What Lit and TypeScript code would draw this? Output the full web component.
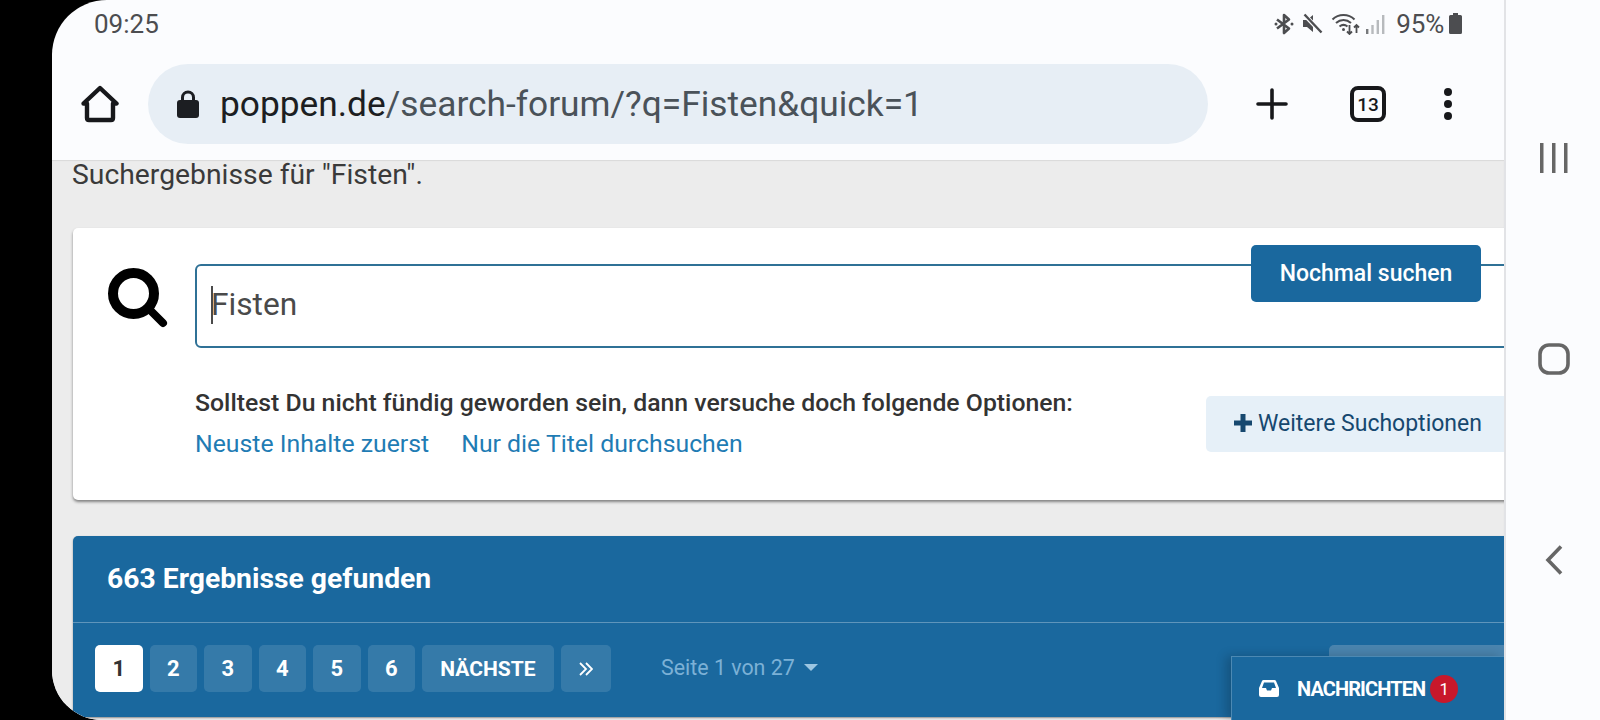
import { LitElement, css, html } from 'lit';
import { customElement } from 'lit/decorators.js';

const PAGES = ['1', '2', '3', '4', '5', '6'];

@customElement('app-root')
export class AppRoot extends LitElement {
  static styles = css`
    :host {
      display: block;
      width: 1600px;
      height: 720px;
      background: #000;
      overflow: hidden;
      font-family: Roboto, "Liberation Sans", sans-serif;
    }
    svg { display: block; flex: none; }

    .screen {
      margin-left: 52px;
      width: 1548px;
      height: 720px;
      display: flex;
      overflow: hidden;
      border-radius: 55px 0 0 50px;
      background: #fbfcfe;
    }
    .browser {
      position: relative;
      width: 1452px;
      height: 720px;
      flex: none;
      display: flex;
      flex-direction: column;
      overflow: hidden;
    }
    .edge { width: 2px; flex: none; background: #e2e3e6; }

    /* android chrome */
    .status {
      height: 50px;
      flex: none;
      display: flex;
      align-items: center;
      padding: 0 42px 3px 42px;
      box-sizing: border-box;
      color: #4c4d50;
      font-size: 26px;
    }
    .status .time { flex: 1; }
    .status .pct { margin: 0 5px 0 11px; letter-spacing: -0.2px; }
    .status .icons { display: flex; align-items: center; gap: 8px; }

    .toolbar {
      height: 110px;
      flex: none;
      display: flex;
      align-items: flex-start;
      padding: 14px 0 0 29px;
      box-sizing: border-box;
    }
    .url {
      width: 1060px;
      height: 80px;
      margin-left: 29px;
      flex: none;
      display: flex;
      align-items: center;
      box-sizing: border-box;
      padding-left: 29px;
      border-radius: 40px;
      background: #e7eef5;
      font-size: 35.3px;
      color: #4a5259;
    }
    .url b { font-weight: 400; color: #1c1e22; }
    .url svg { margin-right: 21px; }
    .tb-actions { display: flex; align-items: center; height: 80px; }
    .tb-plus { margin-left: 48px; }
    .tabs {
      width: 36px;
      height: 36px;
      margin-left: 62px;
      box-sizing: border-box;
      border: 4px solid #17181b;
      border-radius: 8px;
      display: flex;
      align-items: center;
      justify-content: center;
      font-size: 19px;
      font-weight: 500;
      color: #17181b;
    }
    .tb-dots { margin-left: 58px; }

    /* page */
    .page {
      flex: 1;
      min-height: 0;
      display: flex;
      flex-direction: column;
      align-items: flex-start;
      padding-left: 21px;
      background: #ececec;
      box-shadow: inset 0 1px 1px rgba(0, 0, 0, 0.08);
    }
    .lead {
      height: 30px;
      margin-left: -1px;
      line-height: 30px;
      font-size: 28.3px;
      color: #3a3a3a;
    }
    .card {
      position: relative;
      margin-top: 38px;
      width: 1500px;
      height: 272px;
      flex: none;
      padding: 36px 0 0 35px;
      box-sizing: border-box;
      background: #fff;
      border-radius: 5px;
      box-shadow: 0 2px 3px rgba(0, 0, 0, 0.45);
    }
    .search-row { display: flex; align-items: flex-start; gap: 27px; }
    .search-row svg { margin-top: 4px; }
    .field {
      width: 1340px;
      height: 84px;
      box-sizing: border-box;
      display: flex;
      align-items: center;
      padding: 0 0 3px 14px;
      border: 2px solid #2f7196;
      border-radius: 6px;
      font-size: 31.7px;
      color: #4a4a4a;
    }
    .caret { width: 2px; height: 38px; margin-right: -2px; background: #4a4a4a; }
    .again {
      position: absolute;
      left: 1178px;
      top: 17px;
      width: 230px;
      height: 57px;
      display: flex;
      align-items: center;
      justify-content: center;
      border-radius: 5px;
      background: #1a689e;
      color: #fff;
      font-size: 23px;
      font-weight: 500;
    }
    .hints { display: flex; margin: 40px 0 0 87px; }
    .hints-text { width: 1011px; flex: none; }
    .hint {
      line-height: 30px;
      font-size: 24.8px;
      font-weight: 500;
      color: #333;
    }
    .links {
      display: flex;
      gap: 32px;
      margin-top: 11px;
      line-height: 30px;
      font-size: 24.8px;
      color: #1f7cb4;
    }
    .more {
      width: 320px;
      height: 56px;
      margin-top: 8px;
      flex: none;
      display: flex;
      align-items: center;
      gap: 6px;
      padding: 0 0 2px 28px;
      box-sizing: border-box;
      border-radius: 5px;
      background: #e6f0f8;
      font-size: 23px;
      color: #16486f;
    }

    .results {
      margin-top: 36px;
      width: 1500px;
      height: 181px;
      flex: none;
      background: #1a689e;
      border-radius: 5px 0 0 5px;
      box-shadow: 0 1px 2px rgba(0, 0, 0, 0.4);
      color: #fff;
    }
    .results-title {
      height: 87px;
      display: flex;
      align-items: center;
      padding: 0 0 2px 34px;
      box-sizing: border-box;
      font-size: 28.3px;
      font-weight: 700;
      border-bottom: 1px solid rgba(255, 255, 255, 0.3);
    }
    .pager {
      display: flex;
      align-items: center;
      gap: 7px;
      padding: 22px 0 0 22px;
    }
    .pg {
      min-width: 47.5px;
      height: 47px;
      display: flex;
      align-items: center;
      justify-content: center;
      box-sizing: border-box;
      border-radius: 5px;
      background: rgba(255, 255, 255, 0.12);
      font-size: 22px;
      font-weight: 700;
    }
    .pg.active { background: #fff; color: #333; }
    .pg.next { width: 132px; font-size: 21px; }
    .pg.last { width: 50px; }
    .page-of {
      margin-left: 43px;
      padding-bottom: 2px;
      display: flex;
      align-items: center;
      gap: 9px;
      font-size: 21.4px;
      color: #7cb1d6;
    }
    .tri {
      width: 0;
      height: 0;
      border-left: 7px solid transparent;
      border-right: 7px solid transparent;
      border-top: 7px solid #9cc6e2;
    }
    .ghost {
      width: 200px;
      height: 47px;
      margin-left: 504px;
      flex: none;
      border-radius: 5px;
      background: #4a84ae;
    }

    .inbox {
      position: absolute;
      right: 0;
      bottom: 0;
      width: 273px;
      height: 64px;
      display: flex;
      align-items: center;
      padding: 0 0 0 27px;
      box-sizing: border-box;
      background: #1a689e;
      border-top: 1px solid rgba(255, 255, 255, 0.22);
      border-left: 1px solid rgba(255, 255, 255, 0.22);
      box-shadow: -5px 0 10px rgba(0, 0, 0, 0.2);
      color: #fff;
      font-size: 20px;
      font-weight: 700;
      letter-spacing: -0.9px;
    }
    .inbox svg { margin-right: 18px; }
    .badge {
      width: 28px;
      height: 28px;
      margin-left: 5px;
      display: flex;
      align-items: center;
      justify-content: center;
      border-radius: 50%;
      background: #c8182b;
      font-size: 17px;
      font-weight: 400;
      letter-spacing: 0;
    }

    /* system nav */
    .nav {
      flex: 1;
      display: flex;
      flex-direction: column;
      align-items: center;
      justify-content: center;
      gap: 170px;
      padding: 0 0 3px 2px;
      box-sizing: border-box;
    }
  `;

  private statusIcons() {
    return html`
      <svg width="20" height="22" viewBox="0 0 20 22" fill="none" stroke="#4c4d50" stroke-width="2.6" style="margin-left:2px">
        <path d="M3 6.5 L15 15.5 L10 20 V2 L15 6.5 L3 15.5" stroke-linejoin="round"/>
        <circle cx="2" cy="11" r="1.5" fill="#4c4d50" stroke="none"/>
        <circle cx="18" cy="11" r="1.5" fill="#4c4d50" stroke="none"/>
      </svg>
      <svg width="21" height="21" viewBox="0 0 21 21">
        <path d="M1 7 H5 L11 2 V19 L5 14 H1 Z" fill="#4c4d50"/>
        <path d="M2 1.5 L19.5 19.5" stroke="#fbfcfe" stroke-width="4.5"/>
        <path d="M2.5 1.5 L19.5 19.5" stroke="#4c4d50" stroke-width="2.4"/>
      </svg>
      <svg width="31" height="22" viewBox="0 0 30 22" fill="none" stroke="#4c4d50">
        <path d="M1 6.5 C7 0.5 17 0.5 23 6.5" stroke-width="2"/>
        <path d="M4.5 10 C9 6 15 6 19.5 10" stroke-width="2"/>
        <path d="M8 13.5 C10.5 11.5 13.5 11.5 16 13.5" stroke-width="2"/>
        <circle cx="12" cy="16.5" r="1.5" fill="#4c4d50" stroke="none"/>
        <path d="M18 12 V21 M15.5 18.5 L18 21 L20.5 18.5" stroke-width="1.8"/>
        <path d="M25 20 V12 M22.5 14.5 L25 12 L27.5 14.5" stroke-width="1.8"/>
      </svg>
      <svg width="19" height="20" viewBox="0 0 19 20" fill="#b7babd" style="margin-left:-4px">
        <rect x="0" y="15" width="2.4" height="5" fill="#77797c"/>
        <rect x="5.3" y="11" width="2.4" height="9"/>
        <rect x="10.6" y="6" width="2.4" height="14"/>
        <rect x="16" y="1" width="2.4" height="19"/>
      </svg>
    `;
  }

  protected render() {
    return html`
      <div class="screen">
        <div class="browser">
          <div class="status">
            <span class="time">09:25</span>
            <span class="icons">${this.statusIcons()}</span>
            <span class="pct">95%</span>
            <svg width="13" height="21" viewBox="0 0 13 21" fill="#4c4d50">
              <path d="M4 0 H9 V2 H11.5 Q13 2 13 3.5 V19.5 Q13 21 11.5 21 H1.5 Q0 21 0 19.5 V3.5 Q0 2 1.5 2 H4 Z"/>
            </svg>
          </div>
          <div class="toolbar">
            <svg width="38" height="38" viewBox="0 0 38 38" fill="none" stroke="#17181b" stroke-width="4.4" stroke-linejoin="round" stroke-linecap="round" style="margin-top:21px">
              <path d="M2.5 18.5 L19 3 L35.5 18.5 H32 V33 Q32 35 30 35 H8 Q6 35 6 33 V18.5 Z"/>
            </svg>
            <div class="url">
              <svg width="22" height="28" viewBox="0 0 22 28">
                <path d="M5.5 12 V7.5 A5.5 5.5 0 0 1 16.5 7.5 V12" fill="none" stroke="#1c1e22" stroke-width="3"/>
                <rect x="0" y="10" width="22" height="18" rx="3" fill="#1c1e22"/>
              </svg>
              <span><b>poppen.de</b>/search-forum/?q=Fisten&amp;quick=1</span>
            </div>
            <div class="tb-actions">
              <svg class="tb-plus" width="32" height="32" viewBox="0 0 32 32" stroke="#17181b" stroke-width="3.6" stroke-linecap="round">
                <path d="M16 2 V30 M2 16 H30"/>
              </svg>
              <div class="tabs">13</div>
              <svg class="tb-dots" width="8" height="32" viewBox="0 0 8 32" fill="#17181b">
                <circle cx="4" cy="4" r="4"/>
                <circle cx="4" cy="16" r="4"/>
                <circle cx="4" cy="28" r="4"/>
              </svg>
            </div>
          </div>

          <div class="page">
            <div class="lead">Suchergebnisse für "Fisten".</div>
            <div class="card">
              <div class="search-row">
                <svg width="60" height="60" viewBox="0 0 60 60" fill="none" stroke="#000">
                  <circle cx="25.5" cy="25.5" r="20.5" stroke-width="10"/>
                  <path d="M41 41 L55 55" stroke-width="8" stroke-linecap="round"/>
                </svg>
                <div class="field"><span class="caret"></span>Fisten</div>
              </div>
              <div class="again">Nochmal suchen</div>
              <div class="hints">
                <div class="hints-text">
                  <div class="hint">Solltest Du nicht fündig geworden sein, dann versuche doch folgende Optionen:</div>
                  <div class="links">
                    <span>Neuste Inhalte zuerst</span>
                    <span>Nur die Titel durchsuchen</span>
                  </div>
                </div>
                <div class="more">
                  <svg width="18" height="18" viewBox="0 0 18 18" stroke="#16486f" stroke-width="5">
                    <path d="M9 0 V18 M0 9 H18"/>
                  </svg>
                  Weitere Suchoptionen
                </div>
              </div>
            </div>

            <div class="results">
              <div class="results-title">663 Ergebnisse gefunden</div>
              <div class="pager">
                ${PAGES.map(p => html`<div class="pg ${p === '1' ? 'active' : ''}">${p}</div>`)}
                <div class="pg next">NÄCHSTE</div>
                <div class="pg last">
                  <svg width="14" height="14" viewBox="0 0 14 14" fill="none" stroke="#fff" stroke-width="1.8">
                    <path d="M1 1 L7 7 L1 13 M7 1 L13 7 L7 13"/>
                  </svg>
                </div>
                <div class="page-of">Seite 1 von 27 <span class="tri"></span></div>
                <div class="ghost"></div>
              </div>
            </div>
          </div>

          <div class="inbox">
            <svg width="20" height="17" viewBox="0 0 20 17">
              <path fill-rule="evenodd" fill="#fff" d="M4.5 0 H15.5 Q16.5 0 17 1 L20 8 V15 Q20 17 18 17 H2 Q0 17 0 15 V8 L3 1 Q3.5 0 4.5 0 Z M5 2.5 L3 8 H7 L8 10.5 H12 L13 8 H17 L15 2.5 Z"/>
            </svg>
            NACHRICHTEN
            <span class="badge">1</span>
          </div>
        </div>
        <div class="edge"></div>
        <div class="nav">
          <svg width="30" height="30" viewBox="0 0 30 30" fill="#666">
            <rect x="1" y="0" width="3.5" height="30"/>
            <rect x="13" y="0" width="3.5" height="30"/>
            <rect x="25" y="0" width="3.5" height="30"/>
          </svg>
          <svg width="32" height="32" viewBox="0 0 32 32" fill="none" stroke="#666" stroke-width="3.6">
            <rect x="2" y="2" width="28" height="28" rx="9"/>
          </svg>
          <svg width="18" height="30" viewBox="0 0 18 30" fill="none" stroke="#666" stroke-width="3.6">
            <path d="M16 1.5 L3 15 L16 28.5"/>
          </svg>
        </div>
      </div>
    `;
  }
}
